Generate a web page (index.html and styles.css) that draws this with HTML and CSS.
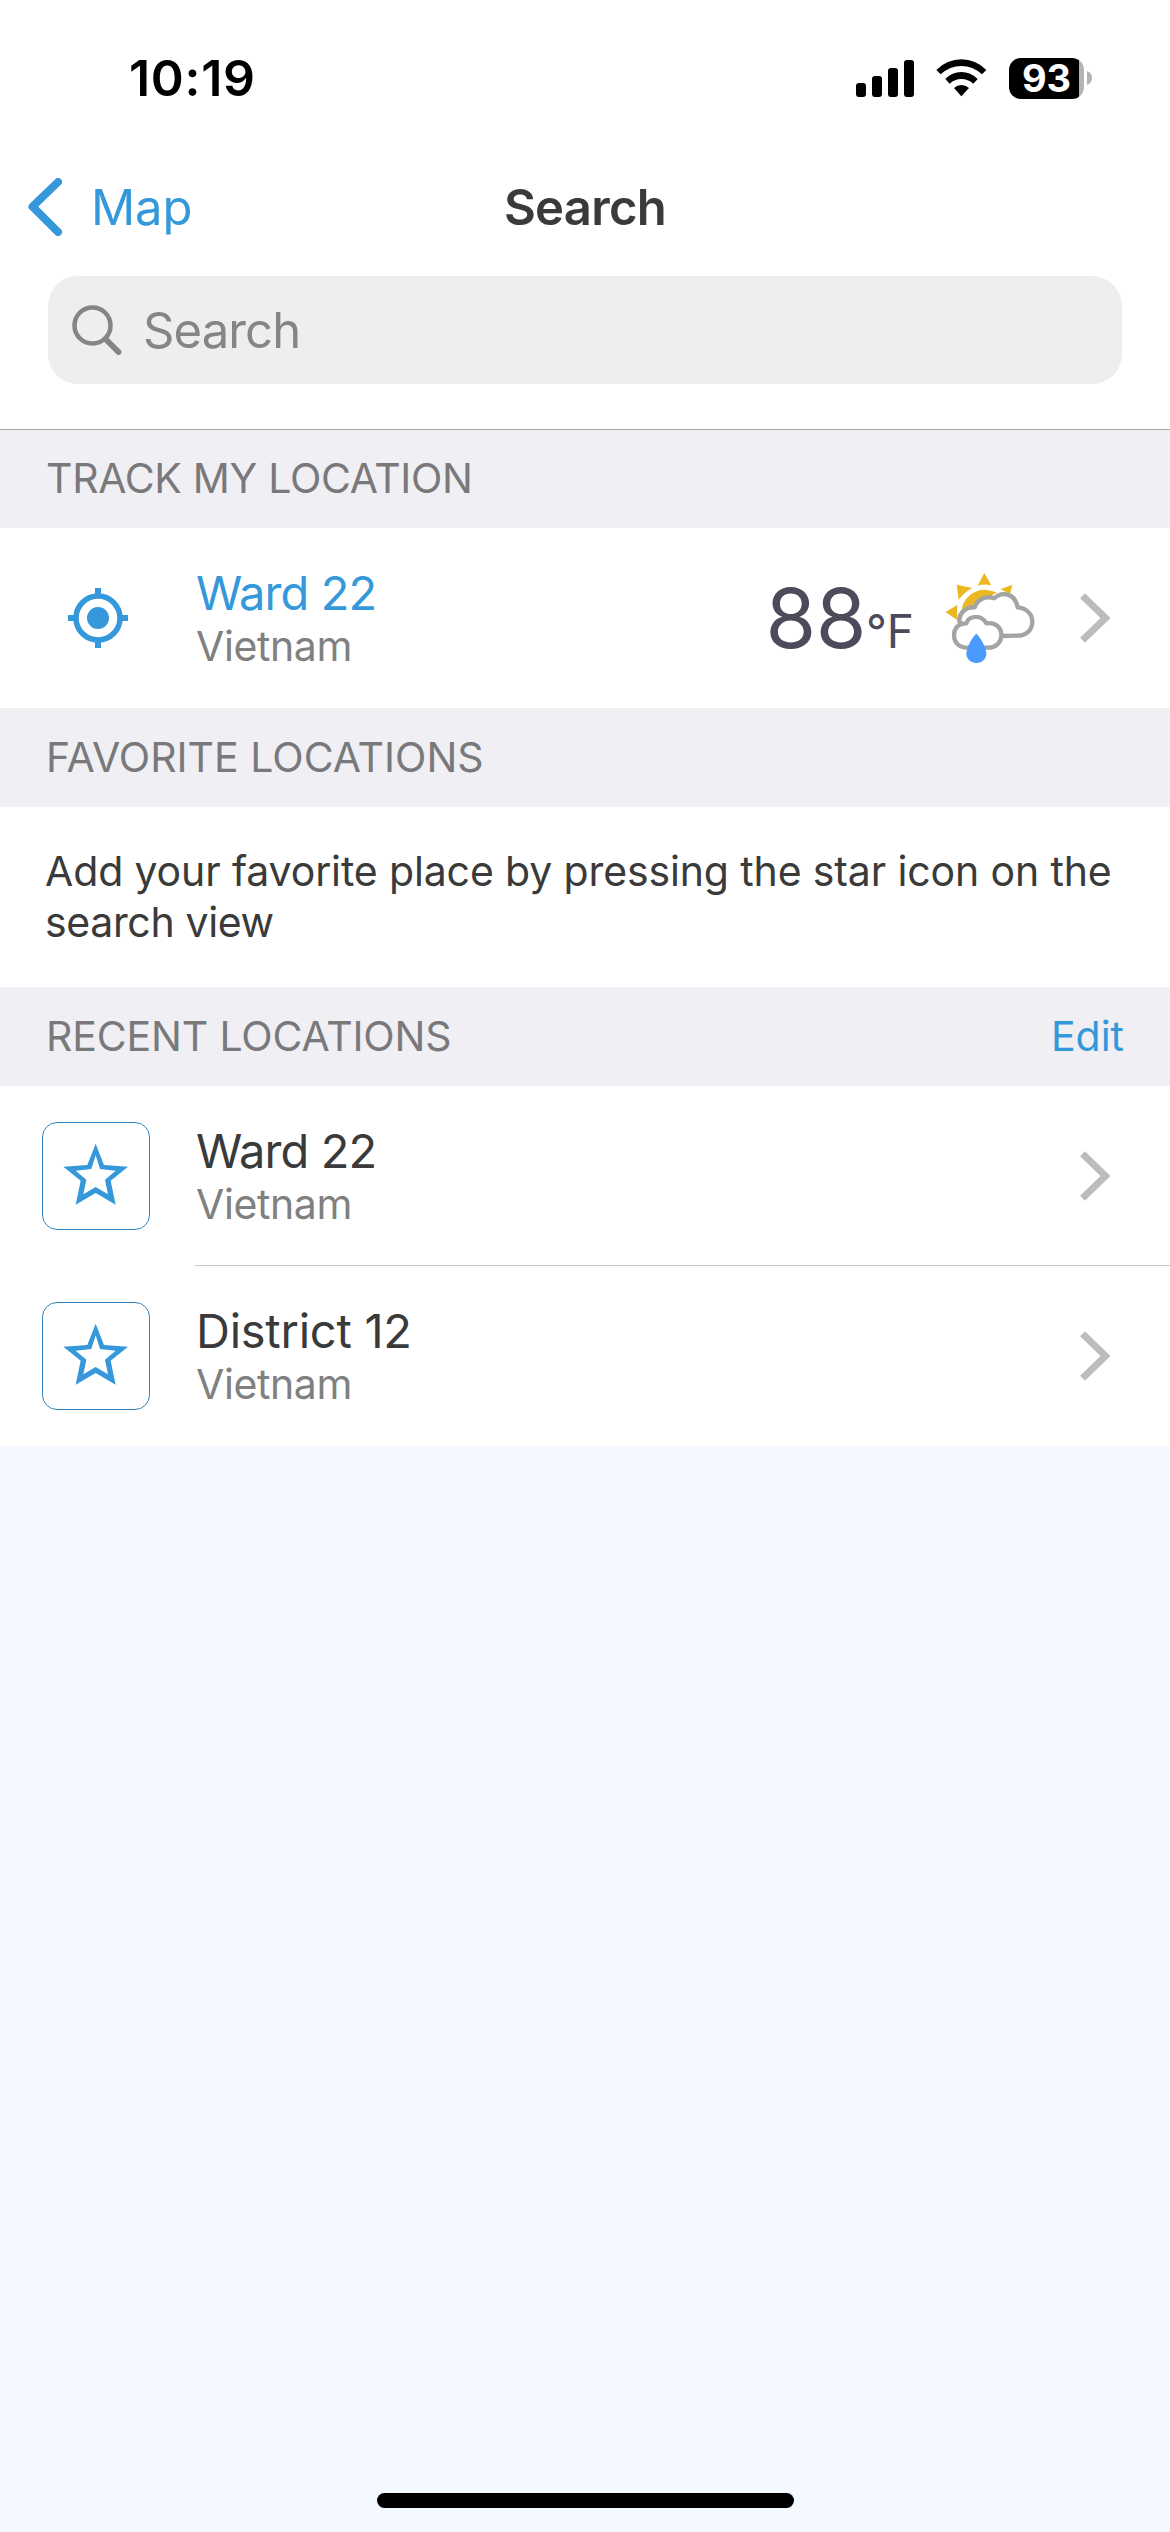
FILE: index.html
```html
<!DOCTYPE html>
<html lang="en">
<head>
<meta charset="utf-8">
<title>Search</title>
<link rel="stylesheet" href="styles.css">
</head>
<body>
<header class="header">
  <div class="status">
    <span class="time">10:19</span>
    <div class="status-icons">
      <svg class="signal" viewBox="0 0 58 37" width="58" height="37"><rect x="0" y="23" width="10" height="14" rx="3"/><rect x="16" y="16" width="10" height="21" rx="3"/><rect x="32" y="8" width="10" height="29" rx="3"/><rect x="48" y="0" width="10" height="37" rx="3"/></svg>
      <svg class="wifi" viewBox="348 86 152 113" width="50.67" height="37.67"><path d="M349 119Q381 87 424 87T499 119L486 132Q458 107 424 107T362 132Z"/><path d="M376 146Q396 125 424 125T473 146L460 160Q444 146 424 146T389 160Z"/><path d="M402 173Q411 164 424 164T447 173L424 198Z"/></svg>
      <div class="battery"><span class="level">93</span><svg class="cap" viewBox="0 0 5 14" width="5" height="14"><path d="M0 0Q5 2 5 7T0 14Z"/></svg></div>
    </div>
  </div>
  <nav class="nav">
    <a class="back"><svg viewBox="0 0 34 58" width="34" height="58"><path d="M30 4L4.500 28.700L30 54"/></svg><span class="back-label">Map</span></a>
    <h1 class="title">Search</h1>
  </nav>
  <div class="search">
    <svg viewBox="0 0 50 50" width="50" height="50"><circle cx="20.500" cy="20.500" r="18"/><path class="handle" d="M33.500 34L46.500 47"/></svg>
    <span class="placeholder">Search</span>
  </div>
</header>
<main>
  <h2 class="section first"><span class="track">TRACK MY LOCATION</span></h2>
  <div class="row">
    <div class="lead"><svg class="target" viewBox="0 0 60 60" width="60" height="60"><circle class="ring" cx="30" cy="30" r="22"/><circle cx="30" cy="30" r="11"/><path d="M27 0h6v8h-6zM27 52h6v8h-6zM0 27h8v6h-8zM52 27h8v6h-8z"/></svg></div>
    <div class="place"><span class="name current">Ward 22</span><span class="country">Vietnam</span></div>
    <div class="temp"><span class="degrees">88</span><span class="unit">°F</span></div>
    <svg class="weather" viewBox="12 12 273 276" width="91" height="92">
      <g fill="#ebb822"><path d="M133 15L154 52Q133 47 113 53ZM50 50L97 60Q71 73 56 96ZM217 50L211 76L200 74Q192 68 181 64ZM16 132L52 111Q50 134 53 157Z"/><path d="M65 130Q66 101 88 83Q112 63 142 66L170 73L122 104L90 124Z"/></g>
      <path class="cloud" d="M58 160C56 138 75 116 104 118C112 94 138 82 163 91C184 70 225 74 233 118C258 120 277 137 277 161C277 186 258 203 232 203L180 204L100 204Z"/>
      <path class="cloud" d="M81 239C58 239 42 224 42 202C42 181 56 165 79 166C86 142 124 138 139 166C166 162 184 178 184 201C184 225 166 239 144 239Z"/>
      <path class="drop" d="M109 197C119 204 139 239 139 256C139 274 126 285 109 285S79 274 79 256C79 239 99 204 109 197Z"/>
    </svg>
    <svg class="chevron" viewBox="0 0 30 50" width="30" height="50"><path d="M2.500 2.700L25.500 25L2.500 47.300"/></svg>
  </div>
  <h2 class="section"><span class="favorite">FAVORITE LOCATIONS</span></h2>
  <p class="hint">Add your favorite place by pressing the star icon on the<br><span class="hint-end">search view</span></p>
  <h2 class="section"><span class="recent">RECENT LOCATIONS</span><a class="edit">Edit</a></h2>
  <div class="row divided">
    <div class="lead"><div class="star"><svg viewBox="10 10 196 188" width="65.33" height="62.67"><path fill-rule="evenodd" d="M108 12L133 76L205 81L153 123L168 195L108 160L48 195L63 123L11 81L83 76ZM108 47L95 88L48 93L80 120L71 164L108 142L145 164L136 120L168 93L121 88Z"/></svg></div></div>
    <div class="place"><span class="name">Ward 22</span><span class="country">Vietnam</span></div>
    <svg class="chevron" viewBox="0 0 30 50" width="30" height="50"><path d="M2.500 2.700L25.500 25L2.500 47.300"/></svg>
  </div>
  <div class="row">
    <div class="lead"><div class="star"><svg viewBox="10 10 196 188" width="65.33" height="62.67"><path fill-rule="evenodd" d="M108 12L133 76L205 81L153 123L168 195L108 160L48 195L63 123L11 81L83 76ZM108 47L95 88L48 93L80 120L71 164L108 142L145 164L136 120L168 93L121 88Z"/></svg></div></div>
    <div class="place"><span class="name district">District 12</span><span class="country">Vietnam</span></div>
    <svg class="chevron" viewBox="0 0 30 50" width="30" height="50"><path d="M2.500 2.700L25.500 25L2.500 47.300"/></svg>
  </div>
</main>
<footer class="home"><div class="home-bar"></div></footer>
</body>
</html>
```
FILE: styles.css
```css
* { box-sizing: border-box; }
body {
  margin: 0;
  width: 1170px;
  height: 2532px;
  display: flex;
  flex-direction: column;
  background: #f4f9ff;
  color: #3a3a3a;
  font-family: Inter, "Liberation Sans", sans-serif;
  overflow: hidden;
}
svg { display: block; flex: none; }
h1, h2, p { margin: 0; font-weight: 400; }
span, a { white-space: nowrap; }

.header { height: 430px; background: #fff; border-bottom: 1px solid #a9a9ac; }
.status { height: 156px; display: flex; align-items: center; justify-content: space-between; padding: 0 78px 0 129px; }
.time { font-size: 50px; font-weight: 600; letter-spacing: 0.7px; color: #000; }
.status-icons { display: flex; align-items: center; }
.wifi { margin-left: 22px; }
.battery { display: flex; align-items: center; margin-left: 22px; }
.level {
  width: 75px; height: 41px; line-height: 41px; border-radius: 12px;
  background: linear-gradient(90deg, #000 70px, #b3b3b3 70px);
  color: #fff; font-size: 38px; font-weight: 700; text-align: center;
}
.cap { margin-left: 3px; fill: #b3b3b3; }

.nav { height: 102px; display: grid; grid-template-columns: 1fr auto 1fr; align-items: center; padding: 0 28px; }
.back { display: flex; align-items: center; gap: 29px; color: #3498db; font-size: 49px; }
.back svg { fill: none; stroke: #3498db; stroke-width: 8; stroke-linecap: round; stroke-linejoin: round; }
.back-label { letter-spacing: -0.2px; }
.title { font-size: 49px; font-weight: 600; letter-spacing: -0.7px; }
.search { height: 108px; margin: 18px 48px 0; padding: 0 24px; display: flex; align-items: center; gap: 21px; border-radius: 30px; background: #eeeeee; color: #858585; font-size: 49px; }
.search svg { fill: none; stroke: #858585; stroke-width: 4.500; stroke-linecap: round; }
.search .handle { stroke-width: 6; }
.placeholder { letter-spacing: -0.9px; }

.section { height: 99px; padding: 0 46px 2px; display: flex; align-items: center; justify-content: space-between; background: #efeff4; color: #79797b; font-size: 41px; }
.section.first { height: 98px; }
.track { letter-spacing: -0.33px; }
.recent { letter-spacing: -0.15px; }
.edit { color: #3498db; }

.row { height: 180px; display: flex; align-items: center; padding-right: 60px; background: #fff; }
.row.divided { background: linear-gradient(#c7c7ca, #c7c7ca) 195px 179px / 975px 1px no-repeat #fff; }
.lead { width: 196px; flex: none; padding-left: 42px; }
.target { margin-left: 26px; fill: #3498db; }
.target .ring { fill: none; stroke: #3498db; stroke-width: 5.500; }
.star { width: 108px; height: 108px; display: flex; align-items: center; justify-content: center; padding-bottom: 3px; border: 1px solid #2f86c2; border-radius: 15px; fill: #3498db; }
.place { flex: 1; display: flex; flex-direction: column; }
.name { font-size: 47px; line-height: 57px; letter-spacing: -0.9px; }
.name.current { color: #3498db; }
.name.district { letter-spacing: -0.25px; }
.country { font-size: 41px; line-height: 51px; letter-spacing: -0.4px; color: #808080; }
.temp { display: flex; align-items: baseline; color: #4b4b5b; }
.degrees { font-size: 82px; letter-spacing: -0.5px; }
.unit { font-size: 46px; }
.weather { margin-left: 30px; }
.weather .cloud { fill: #fff; stroke: #a4a4a4; stroke-width: 13; stroke-linejoin: round; }
.weather .drop { fill: #4b9aff; }
.chevron { margin-left: 45px; fill: none; stroke: #bcbcbe; stroke-width: 7; }

.hint { height: 180px; padding: 39px 45px; background: #fff; font-size: 41px; line-height: 51px; letter-spacing: -0.13px; white-space: nowrap; }
.hint-end { letter-spacing: -0.35px; }

.home { margin-top: auto; height: 39px; display: flex; justify-content: center; }
.home-bar { width: 417px; height: 15px; border-radius: 8px; background: #000; }
```
